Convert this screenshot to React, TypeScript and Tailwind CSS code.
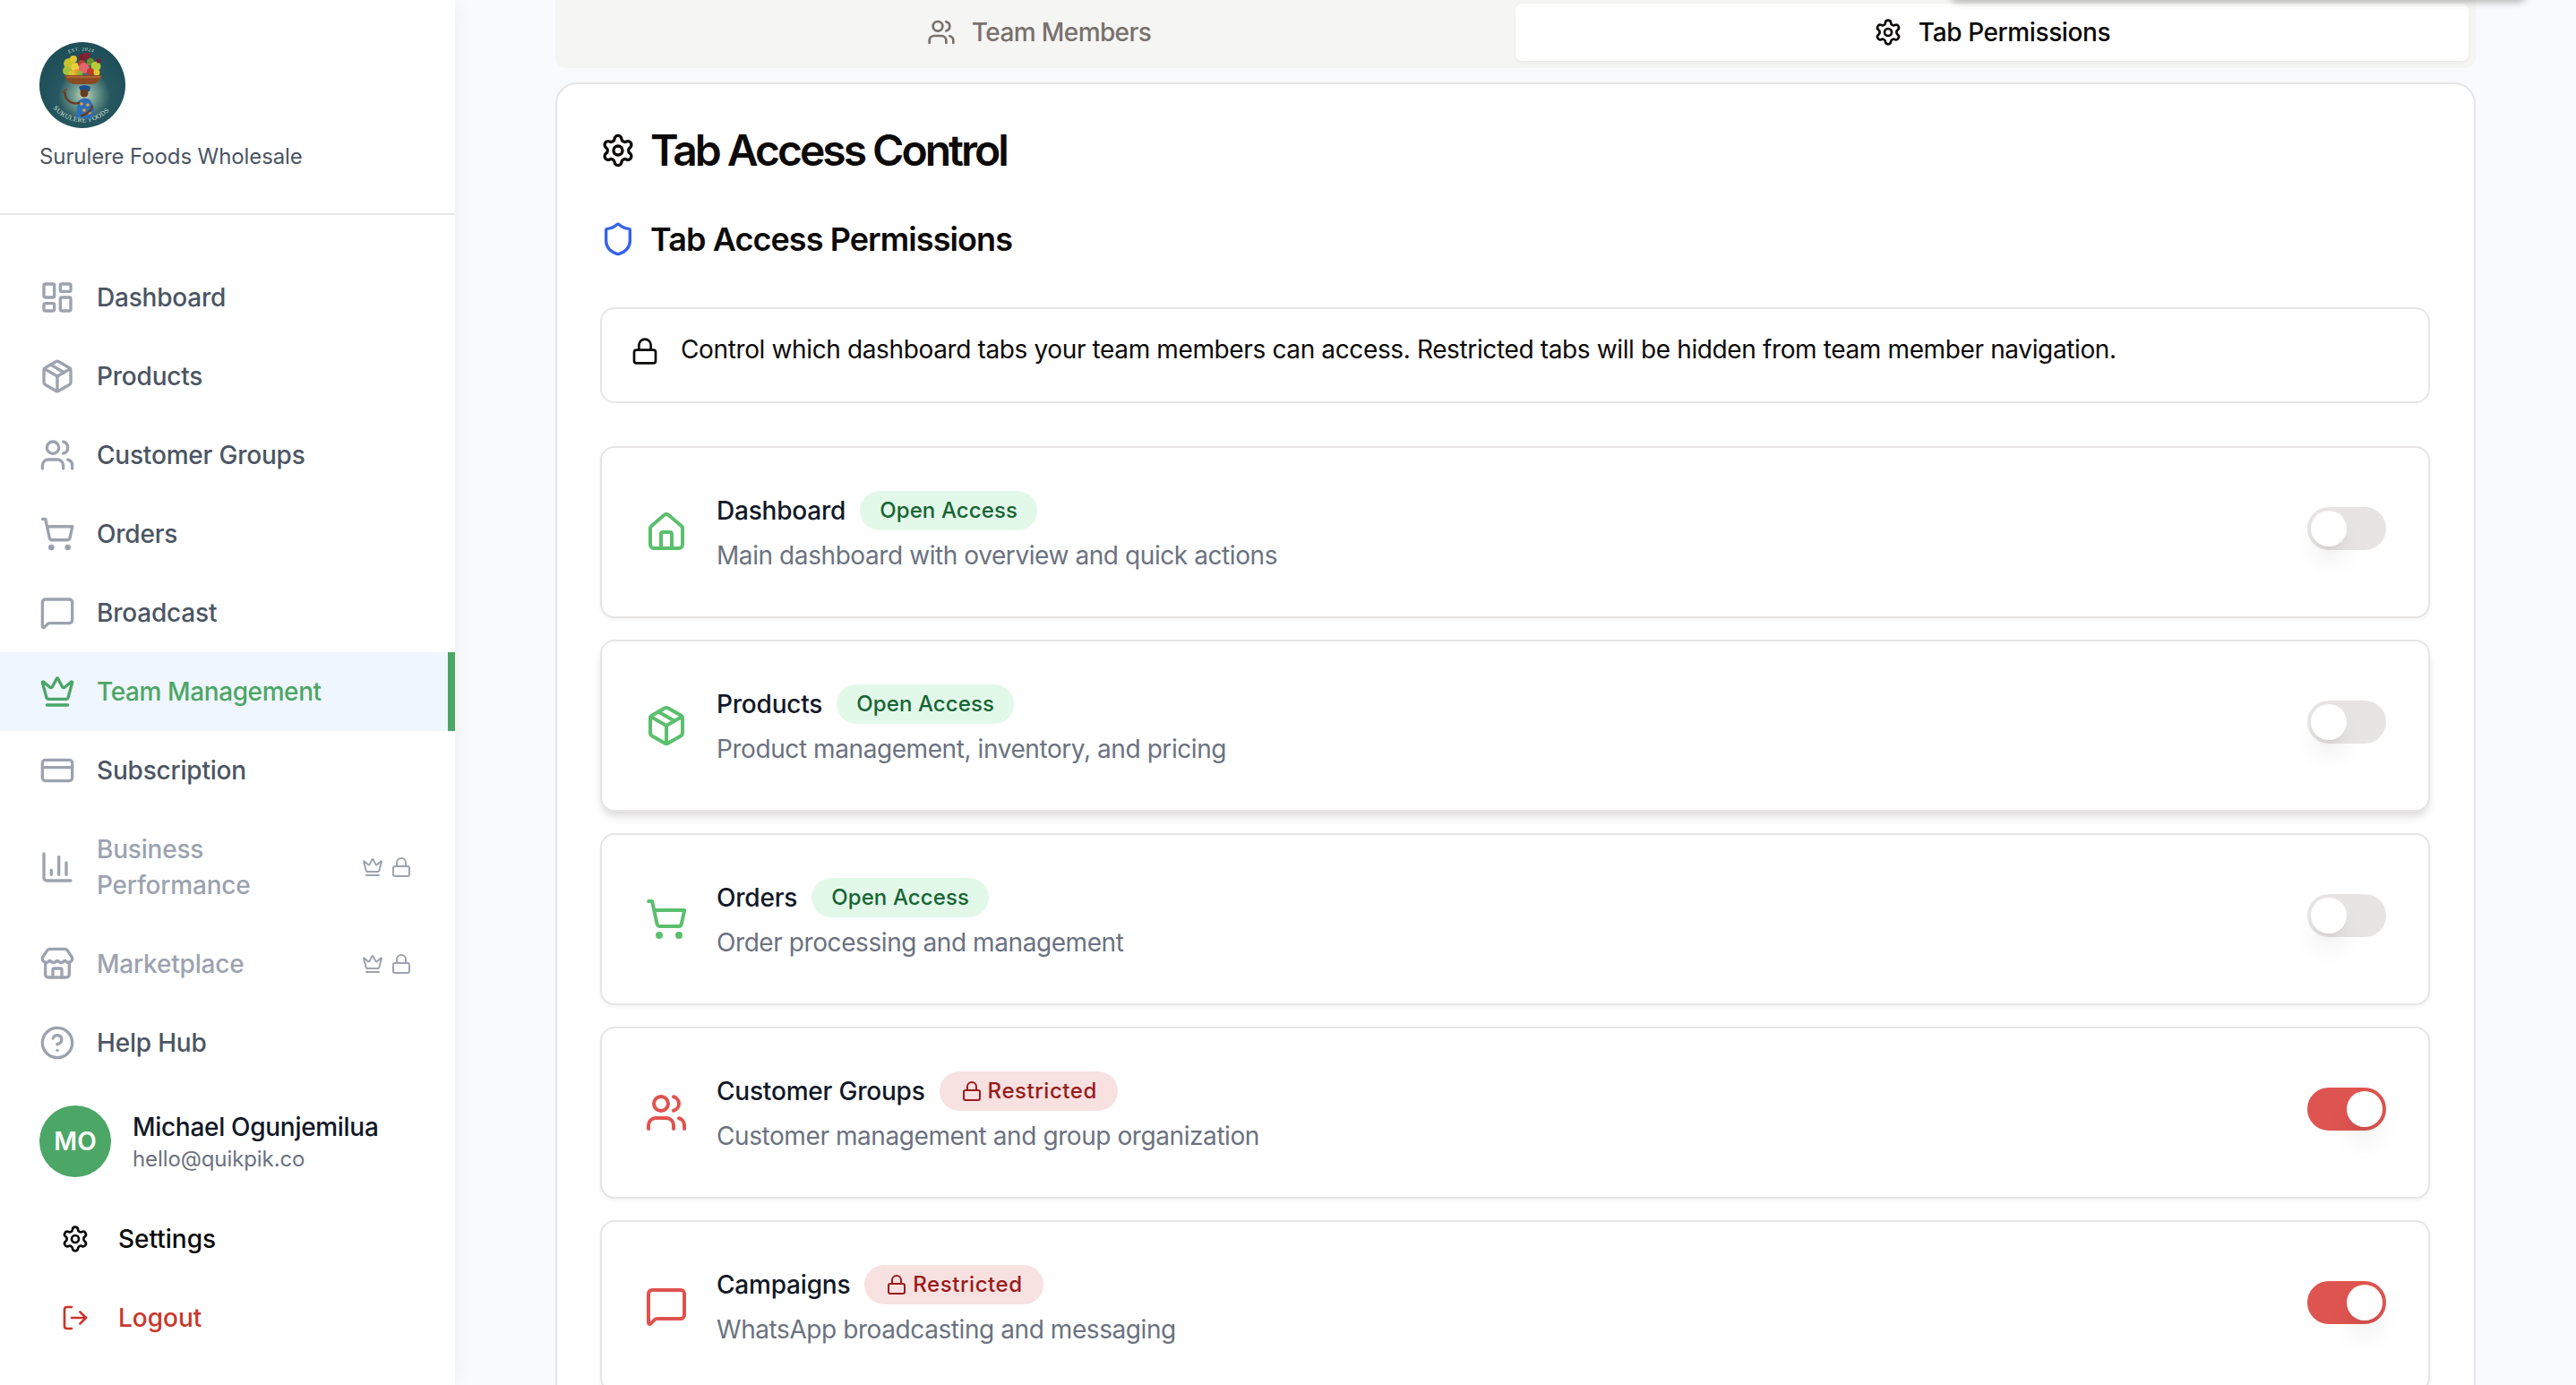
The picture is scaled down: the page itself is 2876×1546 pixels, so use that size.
import { ChartColumn, CircleHelp, CreditCard, Crown, House, LayoutDashboard, Lock, LogOut, MessageSquare, Package, Settings, Shield, ShoppingCart, Store, Users } from "lucide-react";

const font = "font-['Inter',sans-serif]";

function Logo() {
  return (
    <svg viewBox="0 0 96 96" className="w-24 h-24 block" aria-hidden="true">
      <defs>
        <radialGradient id="logoBg" cx="52%" cy="62%" r="52%">
          <stop offset="0%" stopColor="#c4d6b6" />
          <stop offset="26%" stopColor="#6f9a8f" />
          <stop offset="58%" stopColor="#27575f" />
          <stop offset="100%" stopColor="#1f4f59" />
        </radialGradient>
        <path id="logoTop" d="M30 14 A 38 38 0 0 1 66 14" />
        <path id="logoBottom" d="M14 72 A 42 42 0 0 0 82 72" />
      </defs>
      <circle cx="48" cy="48" r="48" fill="url(#logoBg)" />
      <text fontSize="5.5" fill="#cfe0d8" fontFamily="Liberation Serif, serif" letterSpacing="0.6"><textPath href="#logoTop" startOffset="8%">EST. 2024</textPath></text>
      <text fontSize="7.5" fill="#d5e4dc" fontFamily="Liberation Serif, serif" letterSpacing="0.4"><textPath href="#logoBottom" startOffset="3%">SURULERE FOODS</textPath></text>
      <circle cx="33" cy="24" r="6" fill="#c8c12e" />
      <circle cx="31" cy="32" r="5" fill="#a9c23c" />
      <circle cx="38" cy="19" r="4" fill="#e2c62c" />
      <circle cx="40" cy="28" r="5" fill="#e9d13a" />
      <circle cx="42" cy="34" r="4" fill="#ef9c2e" />
      <circle cx="48" cy="17" r="4" fill="#7d1d2b" />
      <circle cx="53" cy="15" r="3.5" fill="#8a2030" />
      <circle cx="47" cy="24" r="4" fill="#b8432e" />
      <circle cx="50" cy="29" r="6" fill="#e4656c" />
      <circle cx="57" cy="22" r="4" fill="#6f8f2c" />
      <circle cx="63" cy="27" r="5.5" fill="#b4cc3a" />
      <circle cx="66" cy="21" r="2.5" fill="#7d1d2b" />
      <circle cx="57" cy="33" r="4" fill="#c0392b" />
      <circle cx="64" cy="34" r="3.5" fill="#e8c72c" />
      <circle cx="45" cy="35" r="3" fill="#8ab83a" />
      <circle cx="36" cy="35" r="3.5" fill="#dcc22e" />
      <path d="M28 37 H70 Q67 47 57 47 H41 Q31 47 28 37 Z" fill="#8a4a24" />
      <path d="M30 39 H68" stroke="#b87238" strokeWidth="1.5" />
      <path d="M44 50 Q49 46 57 50 L56 55 H46 Z" fill="#1c4f8f" />
      <circle cx="50" cy="57" r="4.5" fill="#6b3a20" />
      <path d="M41 84 L43 66 Q50 60 56 64 Q61 70 61 78 L58 86 Z" fill="#2c6fb8" />
      <circle cx="47" cy="69" r="1.8" fill="#e8a23a" />
      <circle cx="54" cy="70" r="1.8" fill="#e8a23a" />
      <circle cx="50" cy="76" r="1.8" fill="#e8a23a" />
      <circle cx="56" cy="79" r="1.8" fill="#e8a23a" />
      <path d="M44 68 Q36 70 30 63 L28 56" stroke="#6b3a20" strokeWidth="2.4" fill="none" strokeLinecap="round" />
      <path d="M26 56 L31 52" stroke="#8a3a20" strokeWidth="1.6" />
      <path d="M59 72 Q56 80 47 82" stroke="#6b3a20" strokeWidth="2.4" fill="none" strokeLinecap="round" />
    </svg>
  );
}

type NavProps = { icon: any; label: string; active?: boolean; locked?: boolean };

function NavItem({ icon: Icon, label, active, locked }: NavProps) {
  return (
    <div className={`flex items-center gap-6 pl-[44px] pr-12 py-6 leading-10 text-[28px] font-medium ${active ? "bg-[#eff6ff] text-[#4ca665] border-r-8 border-[#4ca665] tracking-[-0.4px]" : locked ? "text-[#9ca3af] tracking-[-0.2px]" : "text-[#4b5563] tracking-[-0.2px]"}`}>
      <Icon size={40} strokeWidth={2} className={`shrink-0 ${active ? "text-[#4ca665]" : "text-[#9ca3af]"}`} />
      <span className="flex-1 min-w-0 pr-[60px]">{label}</span>
      {locked && (
        <span className="flex items-center gap-2 text-[#9ca3af]">
          <Crown size={24} strokeWidth={2} />
          <Lock size={24} strokeWidth={2} />
        </span>
      )}
    </div>
  );
}

function Sidebar() {
  return (
    <aside className="w-[508px] shrink-0 h-full bg-white flex flex-col shadow-[6px_0_20px_-4px_rgba(0,0,0,0.05)] z-10">
      <div className="h-[240px] shrink-0 border-b-2 border-[#e5e7eb] pl-[44px] pt-[47px]">
        <Logo />
        <div className="mt-4 text-[24px] leading-8 tracking-[-0.1px] text-[#4b5563]">Surulere Foods Wholesale</div>
      </div>
      <nav className="pt-12 flex flex-col">
        <NavItem icon={LayoutDashboard} label="Dashboard" />
        <NavItem icon={Package} label="Products" />
        <NavItem icon={Users} label="Customer Groups" />
        <NavItem icon={ShoppingCart} label="Orders" />
        <NavItem icon={MessageSquare} label="Broadcast" />
        <NavItem icon={Crown} label="Team Management" active />
        <NavItem icon={CreditCard} label="Subscription" />
        <NavItem icon={ChartColumn} label="Business Performance" locked />
        <NavItem icon={Store} label="Marketplace" locked />
        <NavItem icon={CircleHelp} label="Help Hub" />
      </nav>
      <div className="flex items-center gap-6 pl-[44px] mt-[26px]">
        <div className="w-20 h-20 rounded-full bg-[#4ca665] text-white flex items-center justify-center text-[28px] font-semibold">MO</div>
        <div>
          <div className="text-[28px] leading-10 font-medium tracking-[-0.3px] text-[#111827]">Michael Ogunjemilua</div>
          <div className="text-[24px] leading-8 tracking-[-0.1px] text-[#6b7280]">hello@quikpik.co</div>
        </div>
      </div>
      <div className="mt-[25px] flex flex-col">
        <div className="flex items-center gap-8 pl-[68px] py-6 text-[28px] leading-10 font-medium text-[#0a0a0a]">
          <Settings size={32} strokeWidth={2} />
          <span>Settings</span>
        </div>
        <div className="flex items-center gap-8 pl-[68px] py-6 text-[28px] leading-10 font-medium text-[#c9372c]">
          <LogOut size={32} strokeWidth={2} />
          <span>Logout</span>
        </div>
      </div>
    </aside>
  );
}

type RowProps = { icon: any; title: string; desc: string; on?: boolean; hovered?: boolean };

function Row({ icon: Icon, title, desc, on, hovered }: RowProps) {
  return (
    <div className={`h-48 shrink-0 rounded-2xl border-2 border-[#e7e5e4] bg-white flex items-center pl-12 pr-[47px] ${hovered ? "shadow-[0_8px_12px_-2px_rgba(0,0,0,0.1),0_4px_8px_-4px_rgba(0,0,0,0.1)]" : "shadow-[0_2px_4px_rgba(0,0,0,0.05)]"}`}>
      <Icon size={48} strokeWidth={2} className={`shrink-0 ${on ? "text-[#e0534f]" : "text-[#5bbf6d]"}`} />
      <div className="ml-8 flex-1 min-w-0">
        <div className="flex items-center gap-4 h-11">
          <span className="text-[28px] leading-10 font-medium tracking-[-0.2px] text-[#111827]">{title}</span>
          {on ? (
            <span className="h-11 rounded-full bg-[#f8e1e1] text-[#991b1b] text-[24px] font-medium tracking-[0.55px] pl-6 pr-[23px] flex items-center gap-[6px]">
              <Lock size={24} strokeWidth={2} />
              Restricted
            </span>
          ) : (
            <span className="h-11 rounded-full bg-[#e2f8e9] text-[#166534] text-[24px] font-medium tracking-[0.1px] px-[22px] flex items-center">Open Access</span>
          )}
        </div>
        <div className="mt-2 text-[28px] leading-10 tracking-[-0.42px] text-[#6b7280]">{desc}</div>
      </div>
      <div className={`w-[88px] h-12 -mt-2 rounded-full border-4 shrink-0 flex items-center ${on ? "bg-[#de5450] border-[#de5450] justify-end" : "bg-[#e7e5e4] border-[#e7e5e4] justify-start"}`}>
        <div className="w-10 h-10 rounded-full bg-white shadow-[0_20px_30px_-6px_rgba(0,0,0,0.1),0_8px_12px_-8px_rgba(0,0,0,0.1)]" />
      </div>
    </div>
  );
}

export default function App() {
  return (
    <div className={`${font} relative w-[2876px] h-[1546px] overflow-hidden bg-[#f9fafb] flex`}>
      <Sidebar />
      <main className="flex-1 min-w-0 pl-28 pr-[112px]">
        <div className="h-[76px] pt-1 pb-2 px-2 bg-[#f5f5f4] rounded-b-xl grid grid-cols-2">
          <div className="flex items-center justify-center gap-[18px] text-[28px] font-medium tracking-[-0.6px] text-[#78716c]">
            <Users size={32} strokeWidth={2} />
            Team Members
          </div>
          <div className="flex items-center justify-center gap-[18px] text-[28px] font-medium tracking-[-0.4px] text-[#0c0a09] bg-white rounded-lg shadow-[0_2px_4px_rgba(0,0,0,0.05)]">
            <Settings size={32} strokeWidth={2} />
            Tab Permissions
          </div>
        </div>
        <section className="mt-4 rounded-3xl border-2 border-[#e7e5e4] bg-white pl-12 pr-[49px] pt-[50px] h-[1600px]">
          <div className="flex items-center gap-4 h-12">
            <Settings size={40} strokeWidth={2} className="text-[#0c0a09]" />
            <h1 className="text-[48px] leading-[48px] font-semibold tracking-[-3px] text-[#0c0a09]">Tab Access Control</h1>
          </div>
          <div className="flex items-center gap-4 mt-[51px] h-12">
            <Shield size={40} strokeWidth={2} className="text-[#3563e9]" />
            <h2 className="text-[36px] leading-[48px] font-semibold tracking-[-0.92px] text-[#0c0a09]">Tab Access Permissions</h2>
          </div>
          <div className="mt-[52px] h-[107px] rounded-2xl border-2 border-[#e7e5e4] flex items-start gap-6 pl-8 pt-[25px]">
            <Lock size={32} strokeWidth={2} className="mt-[6px] text-[#0c0a09]" />
            <p className="text-[28px] leading-10 tracking-[-0.37px] text-[#0c0a09]">Control which dashboard tabs your team members can access. Restricted tabs will be hidden from team member navigation.</p>
          </div>
          <div className="mt-12 flex flex-col gap-6">
            <Row icon={House} title="Dashboard" desc="Main dashboard with overview and quick actions" />
            <Row icon={Package} title="Products" desc="Product management, inventory, and pricing" hovered />
            <Row icon={ShoppingCart} title="Orders" desc="Order processing and management" />
            <Row icon={Users} title="Customer Groups" desc="Customer management and group organization" on />
            <Row icon={MessageSquare} title="Campaigns" desc="WhatsApp broadcasting and messaging" on />
          </div>
        </section>
      </main>
      <div className="absolute left-[2178px] top-[-20px] w-[642px] h-5 rounded-lg bg-white shadow-[0_2px_8px_rgba(0,0,0,0.3)]" />
    </div>
  );
}
